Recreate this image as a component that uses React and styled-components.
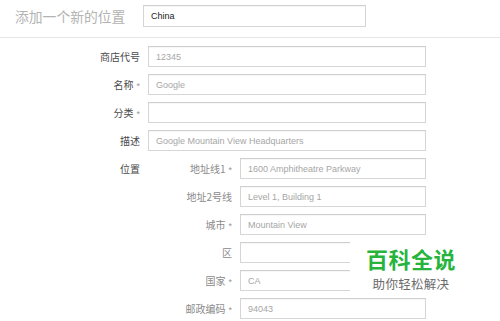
import React from "react";
import styled, { createGlobalStyle } from "styled-components";

const Global = createGlobalStyle`
  html, body { margin: 0; padding: 0; background: #fff; }
  body { font-family: "Liberation Sans", Arial, "Noto Sans CJK SC", sans-serif; }
  * { box-sizing: border-box; }
`;

const Page = styled.div`
  position: relative;
  width: 500px;
  height: 321px;
  overflow: hidden;
  background: #fff;
`;

const Header = styled.div`
  display: flex;
  align-items: flex-start;
  height: 38px;
  padding: 5px 0 0 15px;
  border-bottom: 1px solid #e6e6e6;
`;

const Title = styled.h1`
  margin: 0;
  width: 128px;
  font-family: "Noto Sans CJK SC", sans-serif;
  font-weight: 400;
  font-size: 13.8px;
  line-height: 22px;
  color: #b3b3b3;
  white-space: nowrap;
`;

const Field = styled.div`
  display: flex;
  align-items: center;
  height: ${(p) => p.$h || 21}px;
  width: ${(p) => p.$w}px;
  padding-left: 7px;
  border: 1px solid #d6d6d6;
  border-top-color: #cfcfcf;
  box-shadow: inset 0 1px 1px rgba(0, 0, 0, 0.04);
  background: #fff;
  font-family: "Liberation Sans", Arial, sans-serif;
  font-size: 9px;
  color: ${(p) => (p.$dark ? "#222" : "#a6a6a6")};
  white-space: nowrap;
  overflow: hidden;
`;

const Form = styled.div`
  display: grid;
  grid-template-columns: 140px 278px;
  column-gap: 8px;
  row-gap: 7px;
  padding-top: 8px;
`;

const SubGrid = styled.div`
  display: grid;
  grid-template-columns: 84px 186px;
  column-gap: 8px;
  row-gap: 7px;
`;

const Label = styled.div`
  height: 21px;
  line-height: 21px;
  text-align: right;
  font-family: "Noto Sans CJK SC", sans-serif;
  font-size: 10px;
  font-weight: 400;
  color: ${(p) => (p.$strong ? "#4a4a4a" : "#8a8a8a")};
  white-space: nowrap;
  align-self: start;
`;

const Star = styled.span`
  margin-left: 3px;
  font-family: "Liberation Sans", Arial, sans-serif;
  font-size: 9px;
  color: #999;
`;

const Watermark = styled.div`
  position: absolute;
  left: 350px;
  top: 236px;
  width: 122px;
  height: 58px;
  padding-top: 10px;
  background: #fff;
  display: flex;
  flex-direction: column;
  align-items: center;
  font-family: "Noto Sans CJK SC", sans-serif;
`;

const WmTitle = styled.div`
  height: 24px;
  font-size: 22px;
  font-weight: 700;
  line-height: 24px;
  color: #27b43d;
  letter-spacing: 0.5px;
`;

const WmSub = styled.div`
  margin-top: 7px;
  height: 14px;
  font-size: 12.5px;
  line-height: 14px;
  color: #6a6a6a;
  letter-spacing: 0.3px;
`;

const mainRows = [
  { label: "商店代号", value: "12345" },
  { label: "名称", req: true, value: "Google" },
  { label: "分类", req: true, value: "" },
  { label: "描述", value: "Google Mountain View Headquarters" },
];

const subRows = [
  { label: "地址线1", req: true, value: "1600 Amphitheatre Parkway" },
  { label: "地址2号线", value: "Level 1, Building 1" },
  { label: "城市", req: true, value: "Mountain View" },
  { label: "区", value: "" },
  { label: "国家", req: true, value: "CA" },
  { label: "邮政编码", req: true, value: "94043" },
];

export default function App() {
  return (
    <Page>
      <Global />
      <Header>
        <Title>添加一个新的位置</Title>
        <Field $w={223} $h={22} $dark>China</Field>
      </Header>
      <Form>
        {mainRows.map((r) => (
          <React.Fragment key={r.label}>
            <Label $strong>
              {r.label}
              {r.req && <Star>*</Star>}
            </Label>
            <Field $w={278}>{r.value}</Field>
          </React.Fragment>
        ))}
        <Label $strong>位置</Label>
        <SubGrid>
          {subRows.map((r) => (
            <React.Fragment key={r.label}>
              <Label>
                {r.label}
                {r.req && <Star>*</Star>}
              </Label>
              <Field $w={186}>{r.value}</Field>
            </React.Fragment>
          ))}
        </SubGrid>
      </Form>
      <Watermark>
        <WmTitle>百科全说</WmTitle>
        <WmSub>助你轻松解决</WmSub>
      </Watermark>
    </Page>
  );
}
